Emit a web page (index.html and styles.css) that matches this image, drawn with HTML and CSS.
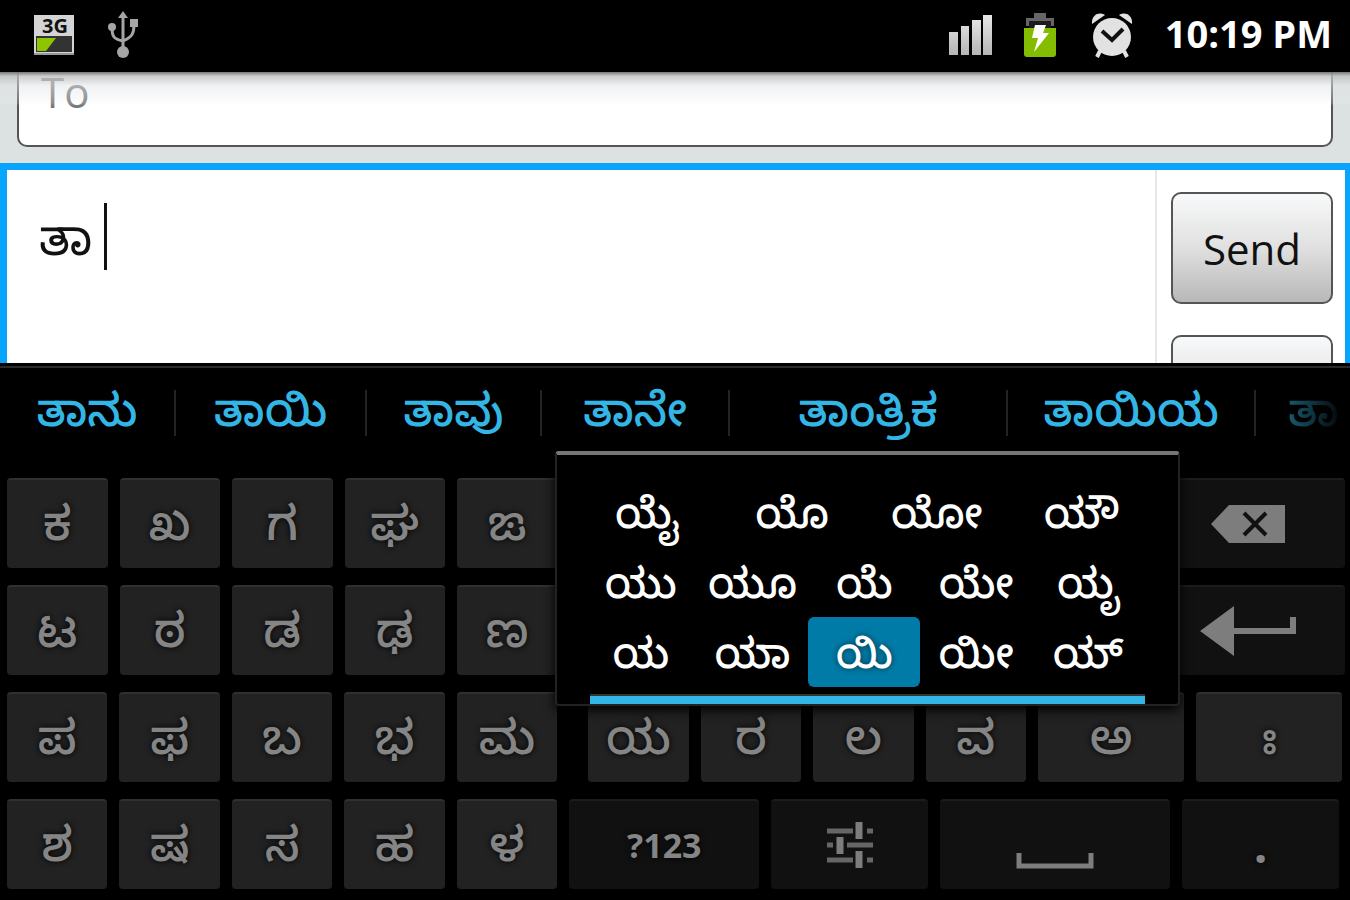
FILE: index.html
```html
<!DOCTYPE html>
<html lang="kn">
<head>
    <meta charset="UTF-8">
    <meta name="viewport" content="width=device-width, initial-scale=1.0">
    <title>Messaging</title>
    <link rel="stylesheet" href="styles.css">
</head>
<body>
    <header class="status-bar">
        <svg class="icon-3g" width="42" height="42" viewBox="0 0 42 42">
            <rect x="1" y="1" width="40" height="40" fill="#d4d4d4"/>
            <text x="22" y="19" class="network-text" text-anchor="middle">3G</text>
            <rect x="3" y="22" width="36" height="16" fill="#333"/>
            <path d="M4 24h19L13 37H4z" fill="#8fc400"/>
            <path d="M1 40h40" stroke="#999" stroke-width="2"/>
        </svg>
        <svg class="icon-usb" width="34" height="50" viewBox="0 0 34 50">
            <g fill="none" stroke="#a5a5a5" stroke-width="3">
                <path d="M17 6v38M17 31C8 29 6 27 6 18M17 31C26 27 28 24 28 14"/>
            </g>
            <g fill="#a5a5a5">
                <path d="M17 1l5 7H12z"/>
                <circle cx="6" cy="17" r="4"/>
                <rect x="24" y="9" width="8" height="8"/>
                <circle cx="17" cy="42" r="6"/>
            </g>
        </svg>
        <span class="spacer"></span>
        <svg class="icon-signal" width="44" height="42" viewBox="0 0 44 42">
            <defs>
                <linearGradient id="bars" x1="0" y1="0" x2="0" y2="1">
                    <stop offset="0" stop-color="#e8e8e8"/>
                    <stop offset="1" stop-color="#b5b5b5"/>
                </linearGradient>
            </defs>
            <path d="M0 18h9v23H0zM12 12h8v29h-8zM23 6h9v35h-9zM34 1h9v40h-9z" fill="url(#bars)"/>
        </svg>
        <svg class="icon-battery" width="34" height="46" viewBox="0 0 34 46">
            <path d="M11 1h12v5h8v8H3V6h8z" fill="#666"/>
            <rect x="6" y="9" width="22" height="8" fill="#1c1c1c"/>
            <path d="M1 16h32v26q0 3-3 3H4q-3 0-3-3z" fill="#84bd00"/>
            <path d="M12 13h11l-3 8h6L11 40l4-14H9z" fill="#fff"/>
        </svg>
        <svg class="icon-alarm" width="42" height="46" viewBox="0 0 42 46">
            <g fill="#e2e2e2">
                <path d="M1 12C0 3 8-1 14 3z"/>
                <path d="M41 12C42 3 34-1 28 3z"/>
                <circle cx="21" cy="25" r="19"/>
            </g>
            <path d="M9 39l-3 6M33 39l3 6" stroke="#e2e2e2" stroke-width="4"/>
            <path d="M11 19l10 9 11-11" fill="none" stroke="#111" stroke-width="4"/>
        </svg>
        <time class="clock">10:19 PM</time>
    </header>

    <main class="message">
        <div class="recipient">
            <input class="to-input" type="text" placeholder="To" aria-label="To">
        </div>
        <div class="compose">
            <div class="editor">
                <textarea class="body-input" aria-label="Message">ತಾ</textarea>
                <span class="caret"></span>
            </div>
            <div class="actions">
                <button type="button" class="send-btn">Send</button>
                <button type="button" class="send-btn" aria-label="More"></button>
            </div>
        </div>
    </main>

    <section class="keyboard">
        <div class="suggestions">
            <button type="button">ತಾನು</button>
            <button type="button">ತಾಯಿ</button>
            <button type="button">ತಾವು</button>
            <button type="button">ತಾನೇ</button>
            <button type="button">ತಾಂತ್ರಿಕ</button>
            <button type="button">ತಾಯಿಯ</button>
            <button type="button" class="faded">ತಾ</button>
        </div>

        <div class="keys">
            <div class="row row-wide">
                <button type="button" class="key">ಕ</button>
                <button type="button" class="key">ಖ</button>
                <button type="button" class="key">ಗ</button>
                <button type="button" class="key">ಘ</button>
                <button type="button" class="key">ಙ</button>
                <span></span>
                <button type="button" class="key key-dark" aria-label="Delete">
                    <svg width="74" height="38" viewBox="0 0 74 38">
                        <path d="M0 19L18 0h56v38H18z" fill="#7d7d7d"/>
                        <path d="M33 8l22 22M55 8L33 30" stroke="#111" stroke-width="4"/>
                    </svg>
                </button>
            </div>
            <div class="row row-wide">
                <button type="button" class="key">ಟ</button>
                <button type="button" class="key">ಠ</button>
                <button type="button" class="key">ಡ</button>
                <button type="button" class="key">ಢ</button>
                <button type="button" class="key">ಣ</button>
                <span></span>
                <button type="button" class="key key-dark" aria-label="Enter">
                    <svg width="96" height="50" viewBox="0 0 96 50">
                        <path d="M0 25L34 0v22h56V11h6v17H34v22z" fill="#7d7d7d"/>
                    </svg>
                </button>
            </div>
            <div class="row row-vowels">
                <button type="button" class="key">ಪ</button>
                <button type="button" class="key">ಫ</button>
                <button type="button" class="key">ಬ</button>
                <button type="button" class="key">ಭ</button>
                <button type="button" class="key">ಮ</button>
                <span></span>
                <button type="button" class="key">ಯ</button>
                <button type="button" class="key">ರ</button>
                <button type="button" class="key">ಲ</button>
                <button type="button" class="key">ವ</button>
                <button type="button" class="key">ಅ</button>
                <button type="button" class="key">&nbsp;ಃ&nbsp;</button>
            </div>
            <div class="row row-bottom">
                <button type="button" class="key">ಶ</button>
                <button type="button" class="key">ಷ</button>
                <button type="button" class="key">ಸ</button>
                <button type="button" class="key">ಹ</button>
                <button type="button" class="key">ಳ</button>
                <button type="button" class="key key-dark key-symbols">?123</button>
                <button type="button" class="key key-dark" aria-label="Settings">
                    <svg width="46" height="46" viewBox="0 0 46 46">
                        <path d="M0 9h26M40 9h6M0 23h6M20 23h26M0 38h26M40 38h6" stroke="#666" stroke-width="5"/>
                        <path d="M32 0v17M13 15v17M32 29v17" stroke="#7d7d7d" stroke-width="7"/>
                    </svg>
                </button>
                <button type="button" class="key key-dark key-space" aria-label="Space">
                    <svg width="78" height="16" viewBox="0 0 78 16">
                        <path d="M3 0v13h72V0" fill="none" stroke="#7d7d7d" stroke-width="5"/>
                    </svg>
                </button>
                <button type="button" class="key key-dark key-dot">.</button>
            </div>

            <div class="popup">
                <div class="popup-row popup-row-top">
                    <button type="button">ಯೈ</button>
                    <button type="button">ಯೊ</button>
                    <button type="button">ಯೋ</button>
                    <button type="button">ಯೌ</button>
                </div>
                <div class="popup-row">
                    <button type="button">ಯು</button>
                    <button type="button">ಯೂ</button>
                    <button type="button">ಯೆ</button>
                    <button type="button">ಯೇ</button>
                    <button type="button">ಯೃ</button>
                </div>
                <div class="popup-row">
                    <button type="button">ಯ</button>
                    <button type="button">ಯಾ</button>
                    <button type="button" class="selected">ಯಿ</button>
                    <button type="button">ಯೀ</button>
                    <button type="button">ಯ್</button>
                </div>
            </div>
        </div>
    </section>
</body>
</html>
```
FILE: styles.css
```css
* {
    box-sizing: border-box;
}
body {
    margin: 0;
    height: 100vh;
    display: flex;
    flex-direction: column;
    overflow: hidden;
    background: #000;
    font-family: 'Open Sans', 'Noto Sans', 'Noto Sans Kannada', sans-serif;
}
button, input, textarea {
    font-family: inherit;
    margin: 0;
    padding: 0;
    border: none;
    background: none;
}

/* status bar */
.status-bar {
    flex: none;
    display: flex;
    align-items: center;
    height: 72px;
    padding: 0 18px 2px 33px;
    background: #000;
}
.icon-usb {
    margin-left: 31px;
}
.spacer {
    flex: 1;
}
.icon-battery {
    margin-left: 30px;
}
.icon-alarm {
    margin: 0 32px 0 34px;
}
.network-text {
    font-size: 20px;
    font-weight: 700;
    fill: #111;
}
.icon-3g {
    overflow: visible;
}
.clock {
    color: #fff;
    font-size: 38px;
    font-weight: 700;
    line-height: 66px;
    padding-bottom: 4px;
}

/* message */
.message {
    flex: 1;
    min-height: 0;
    display: flex;
    flex-direction: column;
    background: #dce1e1;
}
.recipient {
    flex: none;
    position: relative;
    display: flex;
    align-items: flex-end;
    height: 91px;
    padding: 0 17px 16px;
    overflow: hidden;
}
.recipient::after {
    content: "";
    position: absolute;
    top: 0;
    left: 0;
    right: 0;
    height: 34px;
    background: linear-gradient(#777, rgba(190, 192, 192, 0.8) 12%, rgba(225, 228, 230, 0.5) 40%, rgba(240, 242, 245, 0.2) 90%, transparent);
}
.to-input {
    flex: 1;
    height: 112px;
    padding: 0 22px;
    border: 2px solid #555;
    border-radius: 10px;
    background: #fff;
    font-size: 42px;
}
.to-input::placeholder {
    color: #777;
    opacity: 1;
}
.compose {
    flex: 1;
    min-height: 0;
    display: flex;
    border: solid #08a5ff;
    border-width: 7px 5px 0 7px;
    background: #fff;
    overflow: hidden;
}
.editor {
    flex: 1;
    position: relative;
    display: flex;
    border-right: 2px solid #e6e6e6;
}
.body-input {
    flex: 1;
    padding: 36px 32px;
    font-size: 50px;
    line-height: 60px;
    color: #111;
    resize: none;
    outline: none;
    overflow: hidden;
}
.caret {
    position: absolute;
    left: 97px;
    top: 33px;
    width: 3px;
    height: 67px;
    background: #111;
}
.actions {
    flex: none;
    display: flex;
    flex-direction: column;
    gap: 31px;
    padding: 22px 12px 0 14px;
}
.send-btn {
    flex: none;
    width: 162px;
    height: 112px;
    border: 2px solid #555;
    border-radius: 10px;
    background: linear-gradient(#f8f9fa, #e0e0e0 50%, #b8b8b8);
    font-size: 42px;
    font-weight: 500;
    color: #111;
}

/* keyboard */
.keyboard {
    flex: none;
    border-top: 3px solid #000;
    background: #000;
}
.suggestions {
    display: grid;
    grid-template-columns: 176fr 191fr 175fr 188fr 278fr 248fr 94fr;
    height: 85px;
    padding: 22px 0 16px;
    border-top: 2px solid #2a2a2a;
}
.suggestions button {
    min-width: 0;
    padding-bottom: 10px;
    border-right: 2px solid #242424;
    color: #33b5e5;
    font-size: 46px;
    font-weight: 500;
    line-height: 36px;
    white-space: nowrap;
}
.suggestions .faded {
    border: none;
    padding-left: 32px;
    text-align: left;
    color: transparent;
    background: linear-gradient(to right, #1c5f78 30%, #000 95%);
    background-clip: text;
}
.keys {
    position: relative;
    display: flex;
    flex-direction: column;
    gap: 17px;
    padding: 27px 5px 11px 7px;
}
.row {
    display: grid;
    column-gap: 12px;
    height: 90px;
}
.row-wide {
    grid-template-columns: repeat(5, 201fr) 1140fr 387fr;
}
.row-vowels {
    grid-template-columns: repeat(5, 201fr) 14fr repeat(4, 201fr) 292fr 292fr;
    margin-right: 3px;
}
.row-bottom {
    grid-template-columns: repeat(5, 201fr) 380fr 314fr 460fr 314fr;
    margin-right: 6px;
}
.key {
    display: flex;
    align-items: center;
    justify-content: center;
    min-width: 0;
    padding-bottom: 4px;
    border-top: 2px solid #303030;
    border-radius: 4px;
    background: #222;
    color: #858585;
    font-size: 48px;
    font-weight: 500;
    line-height: 60px;
    text-shadow: 0 0 6px #000;
}
.key-dark {
    padding-bottom: 0;
    border-top-color: #1c1c1c;
    background: #111;
}
.key-symbols {
    font-size: 34px;
    font-weight: 700;
}
.key-space {
    align-items: flex-end;
    padding-bottom: 20px;
}
.key-dot {
    font-weight: 700;
}

/* popup over the keys */
.popup {
    position: absolute;
    top: 0;
    left: 41.1%;
    width: 46.3%;
    padding: 22px 34px 17px 28px;
    border: 2px solid #222;
    border-top: 4px solid #777;
    border-radius: 4px;
    background: #000;
    box-shadow: 0 4px 12px #000;
}
.popup::after {
    content: "";
    position: absolute;
    left: 33px;
    right: 33px;
    bottom: 0;
    height: 8px;
    border-top: 2px solid #333;
    background: #33b5e5;
}
.popup-row {
    display: grid;
    grid-template-columns: repeat(5, 1fr);
    height: 70px;
}
.popup-row-top {
    grid-template-columns: repeat(4, 1fr);
    margin: 0 -10px;
}
.popup button {
    border-radius: 6px;
    color: #fff;
    font-size: 42px;
    font-weight: 500;
    line-height: 60px;
}
.popup .selected {
    background: #007ba7;
    text-shadow: 0 0 6px #034;
}
```
